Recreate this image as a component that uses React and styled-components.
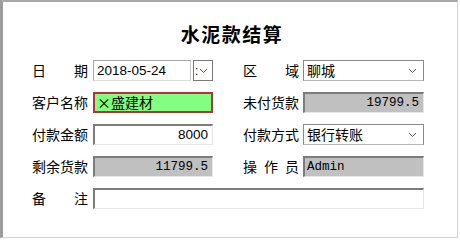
import React from "react"
import styled, { createGlobalStyle } from "styled-components"

const Global = createGlobalStyle`
  html, body {
    margin: 0;
    padding: 0;
    background: #ffffff;
  }
  body {
    font-family: "Noto Sans CJK SC", "Liberation Sans", sans-serif;
    color: #000;
  }
`

function Label({ text }) {
    return (
        <LabelBox>
            {text.split("").map((c, i) => <span key={i}>{c}</span>)}
        </LabelBox>
    )
}

function Chevron() {
    return (
        <svg width="9" height="6" viewBox="0 0 9 6">
            <path d="M1 1 L4.5 4.5 L8 1" fill="none" stroke="#555" strokeWidth="1" />
        </svg>
    )
}

function App() {
    return (
        <>
            <Global />
            <Frame>
                <Title>水泥款结算</Title>
                <Form>
                    <Label text="日期" />
                    <DateGroup>
                        <DateField>2018-05-24</DateField>
                        <DateButton>
                            <span>:</span>
                            <Chevron />
                        </DateButton>
                    </DateGroup>
                    <Spacer />
                    <Label text="区域" />
                    <Select>
                        <span>聊城</span>
                        <Chevron />
                    </Select>

                    <Label text="客户名称" />
                    <Highlight>×盛建材</Highlight>
                    <Spacer />
                    <Label text="未付货款" />
                    <Sunken $gray $mono>19799.5</Sunken>

                    <Label text="付款金额" />
                    <Sunken $right>8000</Sunken>
                    <Spacer />
                    <Label text="付款方式" />
                    <Select>
                        <span>银行转账</span>
                        <Chevron />
                    </Select>

                    <Label text="剩余货款" />
                    <Sunken $gray $mono>11799.5</Sunken>
                    <Spacer />
                    <Label text="操作员" />
                    <Sunken $gray $mono $left>Admin</Sunken>

                    <Label text="备注" />
                    <Sunken $wide />
                </Form>
            </Frame>
        </>
    )
}

export default App

const Frame = styled.div`
   box-sizing: border-box;
   width: 458px;
   height: 238px;
   border-style: solid;
   border-width: 2px 1px 1px 3px;
   border-color: #a8a8a8 #d4d4d4 #d4d4d4 #9c9c9c;
   background: #ffffff;
   display: flex;
   flex-direction: column;
   align-items: center;
`

const Title = styled.div`
   margin-top: 20px;
   font-size: 19px;
   line-height: 24px;
   font-weight: 700;
   letter-spacing: 1.5px;
   margin-left: 4px;
`

const Form = styled.div`
   align-self: flex-start;
   margin-top: 14px;
   margin-left: 29px;
   display: grid;
   grid-template-columns: 56px 120px 20px 56px 120px;
   grid-auto-rows: 21px;
   column-gap: 5px;
   row-gap: 11px;
   & > :nth-child(5n + 5) {
     margin-left: -1px;
   }
`

const Spacer = styled.div``

const LabelBox = styled.div`
   display: flex;
   justify-content: space-between;
   align-items: center;
   font-size: 14px;
   line-height: 21px;
`

const DateGroup = styled.div`
   display: flex;
   gap: 2px;
`

const DateField = styled.div`
   box-sizing: border-box;
   width: 98px;
   height: 21px;
   border: 1px solid #a8a8a8;
   border-bottom-color: #dcdcdc;
   border-right-color: #c8c8c8;
   padding-left: 3px;
   font-family: "Liberation Sans", Arial, sans-serif;
   font-size: 13.5px;
   line-height: 19px;
`

const DateButton = styled.div`
   box-sizing: border-box;
   width: 20px;
   height: 21px;
   border: 1px solid #7a7a7a;
   display: flex;
   align-items: center;
   gap: 1px;
   font-family: "Liberation Sans", Arial, sans-serif;
   font-size: 12px;
   & span {
     margin-left: 1px;
   }
`

const Select = styled.div`
   box-sizing: border-box;
   height: 21px;
   border: 1px solid #8a8a8a;
   border-bottom-color: #b8b8b8;
   display: flex;
   align-items: center;
   justify-content: space-between;
   padding: 0 6px 0 3px;
   font-size: 14px;
   line-height: 19px;
`

const Highlight = styled.div`
   box-sizing: border-box;
   height: 21px;
   border: 2px solid #b8303a;
   background: #80ff80;
   padding-left: 2px;
   font-size: 14px;
   line-height: 17px;
`

const Sunken = styled.div`
   box-sizing: border-box;
   height: 21px;
   border-style: solid;
   border-width: 2px 1px 1px 2px;
   border-color: #7c7c7c #e6e6e6 #e6e6e6 #7c7c7c;
   background: ${p => (p.$gray ? "#c0c0c0" : "#ffffff")};
   grid-column: ${p => (p.$wide ? "2 / 6" : "auto")};
   text-align: ${p => (p.$left ? "left" : "right")};
   padding: 0 4px 0 2px;
   font-family: ${p => (p.$mono ? "\"Liberation Mono\", monospace" : "\"Liberation Sans\", Arial, sans-serif")};
   font-size: ${p => (p.$mono ? "12.5px" : "13.5px")};
   line-height: 18px;
`
